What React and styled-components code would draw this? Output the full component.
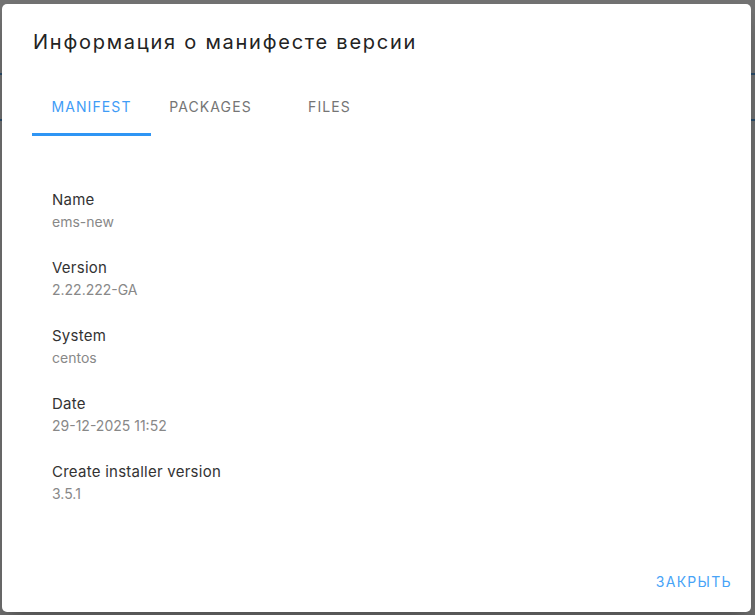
import React, { useState } from 'react'
import styled, { createGlobalStyle } from 'styled-components'

const GlobalStyle = createGlobalStyle`
  html, body {
    margin: 0;
    padding: 0;
    height: 100%;
  }
  body {
    font-family: Inter, "Noto Sans", sans-serif;
  }
  #root {
    height: 100%;
  }
`

const Backdrop = styled.div`
  height: 100vh;
  box-sizing: border-box;
  padding-right: 2px;
  display: flex;
  align-items: center;
  justify-content: center;
  background-color: #737373;
  background-image: linear-gradient(
    to bottom,
    transparent 73px,
    #2b4d6b 73px,
    #2b4d6b 75px,
    transparent 75px,
    transparent 119px,
    #2b4d6b 119px,
    #2b4d6b 121px,
    transparent 121px
  );
`

const Dialog = styled.div`
  width: 749px;
  height: 608px;
  background: #fff;
  border-radius: 5px;
  display: flex;
  flex-direction: column;
  box-shadow: 0 11px 15px -7px rgba(0,0,0,0.2), 0 24px 38px 3px rgba(0,0,0,0.14);
  overflow: hidden;
`

const Title = styled.h2`
  margin: 0;
  padding: 22px 31px 0;
  font-size: 20px;
  line-height: 32px;
  font-weight: 400;
  letter-spacing: 1.75px;
  color: #232323;
`

const TabBar = styled.div`
  display: flex;
  margin: 18px 30px 0;
`

const Tab = styled.button`
  width: 119px;
  height: 60px;
  border: 0;
  background: none;
  padding: 0;
  font-family: inherit;
  font-size: 14px;
  font-weight: 400;
  letter-spacing: 1.1px;
  text-transform: uppercase;
  color: ${p => (p.$active ? '#3f9cf6' : '#757575')};
  border-bottom: 3px solid ${p => (p.$active ? '#2f95f4' : 'transparent')};
  box-sizing: border-box;
  padding-top: 4px;
  cursor: pointer;
`

const Content = styled.div`
  flex: 1;
  padding: 53px 50px 0;
`

const Field = styled.div`
  margin-bottom: 24px;
`

const Label = styled.div`
  font-size: 15px;
  line-height: 22px;
  letter-spacing: 0.25px;
  color: #333;
`

const Value = styled.div`
  font-size: 14px;
  line-height: 22px;
  color: #888;
`

const Actions = styled.div`
  display: flex;
  justify-content: flex-end;
  padding: 0 11px 12px;
`

const CloseButton = styled.button`
  border: 0;
  background: none;
  padding: 6px 8px;
  font-family: inherit;
  font-size: 14px;
  font-weight: 400;
  letter-spacing: 1.3px;
  line-height: 24px;
  color: #47a3f7;
  text-transform: uppercase;
  cursor: pointer;
`

const tabs = ['Manifest', 'Packages', 'Files']

const fields = [
  { label: 'Name', value: 'ems-new' },
  { label: 'Version', value: '2.22.222-GA' },
  { label: 'System', value: 'centos' },
  { label: 'Date', value: '29-12-2025 11:52' },
  { label: 'Create installer version', value: '3.5.1' },
]

const App = () => {
  const [tab, setTab] = useState(0)

  return (
    <>
      <GlobalStyle />
      <Backdrop>
        <Dialog>
          <Title>Информация о манифесте версии</Title>
          <TabBar>
            {tabs.map((t, i) => (
              <Tab key={t} $active={tab === i} onClick={() => setTab(i)}>
                {t}
              </Tab>
            ))}
          </TabBar>
          <Content>
            {tab === 0 &&
              fields.map(f => (
                <Field key={f.label}>
                  <Label>{f.label}</Label>
                  <Value>{f.value}</Value>
                </Field>
              ))}
          </Content>
          <Actions>
            <CloseButton>Закрыть</CloseButton>
          </Actions>
        </Dialog>
      </Backdrop>
    </>
  )
}

export default App
